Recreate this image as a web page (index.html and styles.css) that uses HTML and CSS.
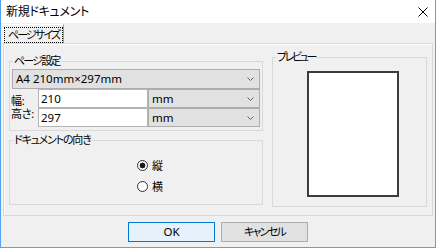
FILE: index.html
```html
<!DOCTYPE html>
<html lang="ja">
<head>
<meta charset="utf-8">
<title>新規ドキュメント</title>
<link rel="stylesheet" href="styles.css">
</head>
<body>
<div class="window">
  <div class="titlebar">
    <span class="title">新規ドキュメント</span>
    <svg class="close" width="10" height="10" viewBox="0 0 10 10"><path d="M0.5 0.5 L9.5 9.5 M9.5 0.5 L0.5 9.5" stroke="#000" stroke-width="1" fill="none"/></svg>
  </div>
  <div class="client">
    <div class="tabs">
      <div class="tab"><span class="focus">ページサイズ</span></div>
    </div>
    <div class="panel">
      <div class="left">
        <fieldset class="group g-page">
          <legend class="lg-page">ページ設定</legend>
          <div class="combo wide"><span class="latin">A4 210mm×297mm</span><svg class="chev" width="7" height="4" viewBox="0 0 7 4"><polyline points="0.5,0.5 3.5,3.5 6.5,0.5" stroke="#606060" fill="none"/></svg></div>
          <div class="row">
            <span class="lbl lbl1">幅:</span>
            <div class="input latin">210</div>
            <div class="combo unit"><span class="latin">mm</span><svg class="chev" width="7" height="4" viewBox="0 0 7 4"><polyline points="0.5,0.5 3.5,3.5 6.5,0.5" stroke="#606060" fill="none"/></svg></div>
          </div>
          <div class="row">
            <span class="lbl lbl2">高さ:</span>
            <div class="input latin">297</div>
            <div class="combo unit"><span class="latin">mm</span><svg class="chev" width="7" height="4" viewBox="0 0 7 4"><polyline points="0.5,0.5 3.5,3.5 6.5,0.5" stroke="#606060" fill="none"/></svg></div>
          </div>
        </fieldset>
        <fieldset class="group g-orient">
          <legend class="lg-orient">ドキュメントの向き</legend>
          <div class="radios">
            <div class="radio"><span class="dot checked"></span><span>縦</span></div>
            <div class="radio"><span class="dot"></span><span>横</span></div>
          </div>
        </fieldset>
      </div>
      <div class="right">
        <fieldset class="group g-preview">
          <legend class="lg-preview">プレビュー</legend>
          <div class="page"></div>
        </fieldset>
      </div>
    </div>
    <div class="buttons">
      <button class="btn default">OK</button>
      <button class="btn cancel">キャンセル</button>
    </div>
  </div>
</div>
</body>
</html>
```
FILE: styles.css
```css
* { box-sizing: border-box; }
html, body { margin: 0; padding: 0; }
body {
  font-family: "Noto Sans", "Noto Sans CJK JP", sans-serif;
  font-size: 11px;
  font-feature-settings: "palt";
  color: #000;
  background: #f0f0f0;
}
.latin { font-size: 11.5px; letter-spacing: 0; }
.window {
  width: 436px;
  height: 248px;
  border: 1px solid #55a3ec;
  border-top: 0;
  background: #f0f0f0;
  display: flex;
  flex-direction: column;
}
.titlebar {
  height: 23px;
  flex: none;
  background: #fff;
  display: flex;
  align-items: center;
  justify-content: space-between;
  padding: 0 7px 0 5px;
}
.title {
  font-size: 12px;
  letter-spacing: -0.3px;
  line-height: 14px;
  white-space: nowrap;
}
.close { display: block; }
.client {
  flex: 1;
  display: flex;
  flex-direction: column;
  padding-top: 1px;
}
.tabs {
  display: flex;
  padding-left: 2px;
  height: 19px;
  flex: none;
}
.tab {
  width: 61px;
  height: 19px;
  border-top: 1px solid #fff;
  border-left: 1px solid #fff;
  border-right: 1px solid #a0a0a0;
  padding-top: 2px;
}
.focus {
  display: block;
  height: 16px;
  border: 1px dotted #000;
  padding-left: 3px;
  line-height: 14px;
  white-space: nowrap;
  letter-spacing: -1.9px;
  overflow: hidden;
}
.panel {
  margin: 0 2px;
  height: 173px;
  flex: none;
  border: 1px solid #d9d9d9;
  box-shadow: inset 1px 1px 0 #fff;
  display: flex;
  gap: 9px;
  padding: 0 4px 0 5px;
}
.left { width: 254px; padding-top: 11px; }
.right { width: 155px; padding-top: 7px; }
.group {
  margin: 0;
  padding: 0 2px;
  border: 1px solid #d9d9d9;
  min-width: 0;
}
.group legend {
  margin-left: 1px;
  padding: 0 1px;
  line-height: 12px;
  height: 12px;
  white-space: nowrap;
}
.lg-page { letter-spacing: -1.8px; }
.lg-orient { letter-spacing: -1.2px; }
.lg-preview { letter-spacing: -2.4px; }
.g-page { padding-bottom: 3px; }
.combo {
  display: flex;
  align-items: center;
  justify-content: space-between;
  background: #e1e1e1;
  border: 1px solid #adadad;
  padding: 0 5px 0 3px;
  line-height: 14px;
  white-space: nowrap;
}
.chev { display: block; flex: none; }
.combo.wide { width: 248px; height: 20px; margin-top: 2px; }
.row { display: flex; height: 19px; }
.lbl {
  width: 26px;
  flex: none;
  line-height: 12px;
  white-space: nowrap;
  letter-spacing: -0.3px;
  margin-left: -1px;
}
.lbl1 { padding-top: 6px; }
.lbl2 { padding-top: 0; }
.input {
  width: 110px;
  flex: none;
  height: 19px;
  background: #fff;
  border: 1px solid #b4b4b4;
  padding-left: 2px;
  line-height: 17px;
  margin-left: 1px;
}
.combo.unit { width: 112px; height: 19px; flex: none; }
.g-orient { margin-top: 3px; }
.radios { padding: 9px 0 7px 125px; }
.radio {
  display: flex;
  align-items: center;
  gap: 4px;
  height: 21px;
  line-height: 14px;
}
.dot {
  width: 11px;
  height: 11px;
  flex: none;
  border-radius: 50%;
  border: 1px solid #333;
  background: #fff;
}
.dot.checked {
  background: radial-gradient(circle, #1a1a1a 0 2.6px, #fff 3.2px);
}
.g-preview { padding-bottom: 9px; }
.page {
  width: 92px;
  height: 126px;
  margin: 8px 0 0 32px;
  background: #fff;
  border: 2px solid #3c3c3c;
}
.buttons {
  display: flex;
  justify-content: center;
  gap: 6px;
  margin-top: 6px;
}
.btn {
  width: 87px;
  height: 20px;
  padding: 0;
  font: inherit;
  font-feature-settings: "palt";
  line-height: 18px;
  color: #000;
  background: #e1e1e1;
  border: 1px solid #adadad;
}
.btn.default {
  font-size: 11.5px;
  background: #e5f1fb;
  border-color: #0078d7;
}
.btn.cancel { letter-spacing: -1.7px; }
```
